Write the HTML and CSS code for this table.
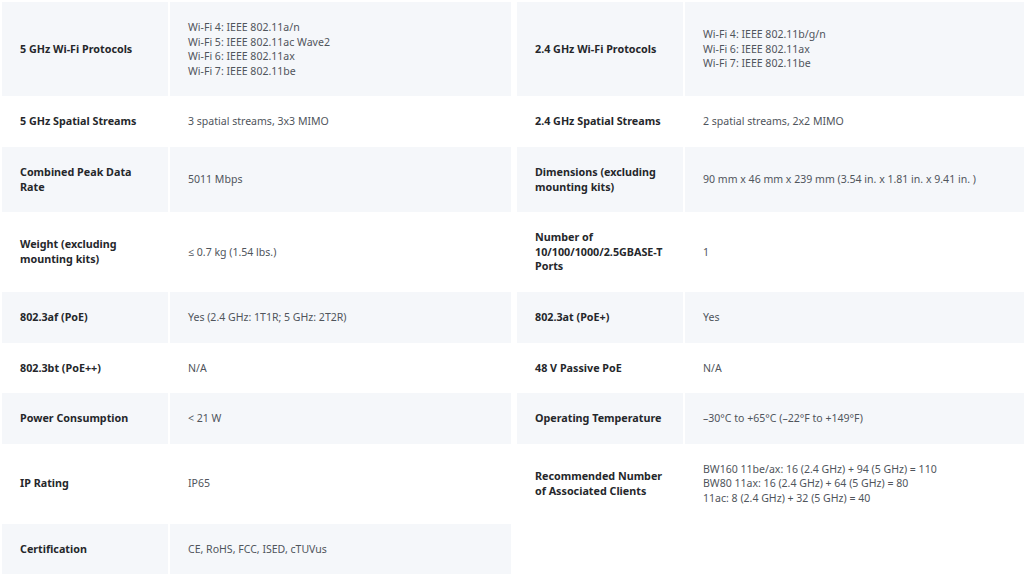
FILE: index.html
```html
<!DOCTYPE html>
<html lang="en">
<head>
<meta charset="utf-8">
<title>Specifications</title>
<link rel="stylesheet" href="styles.css">
</head>
<body>
<div class="specs">
  <div class="spec shade"><div class="label">5 GHz Wi-Fi Protocols</div><div class="value">Wi-Fi 4: IEEE 802.11a/n<br>Wi-Fi 5: IEEE 802.11ac Wave2<br>Wi-Fi 6: IEEE 802.11ax<br>Wi-Fi 7: IEEE 802.11be</div></div>
  <div class="spec shade"><div class="label">2.4 GHz Wi-Fi Protocols</div><div class="value">Wi-Fi 4: IEEE 802.11b/g/n<br>Wi-Fi 6: IEEE 802.11ax<br>Wi-Fi 7: IEEE 802.11be</div></div>

  <div class="spec"><div class="label">5 GHz Spatial Streams</div><div class="value">3 spatial streams, 3x3 MIMO</div></div>
  <div class="spec"><div class="label">2.4 GHz Spatial Streams</div><div class="value">2 spatial streams, 2x2 MIMO</div></div>

  <div class="spec shade"><div class="label">Combined Peak Data Rate</div><div class="value">5011 Mbps</div></div>
  <div class="spec shade"><div class="label">Dimensions (excluding mounting kits)</div><div class="value">90 mm x 46 mm x 239 mm (3.54 in. x 1.81 in. x 9.41 in. )</div></div>

  <div class="spec"><div class="label">Weight (excluding mounting kits)</div><div class="value">≤ 0.7 kg (1.54 lbs.)</div></div>
  <div class="spec"><div class="label">Number of 10/100/1000/2.5GBASE-T Ports</div><div class="value">1</div></div>

  <div class="spec shade"><div class="label">802.3af (PoE)</div><div class="value">Yes (2.4 GHz: 1T1R; 5 GHz: 2T2R)</div></div>
  <div class="spec shade"><div class="label">802.3at (PoE+)</div><div class="value">Yes</div></div>

  <div class="spec"><div class="label">802.3bt (PoE++)</div><div class="value">N/A</div></div>
  <div class="spec"><div class="label">48 V Passive PoE</div><div class="value">N/A</div></div>

  <div class="spec shade"><div class="label">Power Consumption</div><div class="value">&lt; 21 W</div></div>
  <div class="spec shade"><div class="label">Operating Temperature</div><div class="value">–30°C to +65°C (–22°F to +149°F)</div></div>

  <div class="spec"><div class="label">IP Rating</div><div class="value">IP65</div></div>
  <div class="spec"><div class="label">Recommended Number of Associated Clients</div><div class="value">BW160 11be/ax: 16 (2.4 GHz) + 94 (5 GHz) = 110<br>BW80 11ax: 16 (2.4 GHz) + 64 (5 GHz) = 80<br>11ac: 8 (2.4 GHz) + 32 (5 GHz) = 40</div></div>

  <div class="spec shade"><div class="label">Certification</div><div class="value">CE, RoHS, FCC, ISED, cTUVus</div></div>
</div>
</body>
</html>
```
FILE: styles.css
```css
html, body {
  margin: 0;
  padding: 0;
  background: #ffffff;
  overflow: hidden;
}

body {
  font-family: "Noto Sans", "Open Sans", sans-serif;
  font-size: 11px;
  line-height: 14.6px;
}

.specs {
  display: grid;
  grid-template-columns: 509px 509px;
  column-gap: 6px;
  padding: 2px 0 0 2px;
  width: 1030px;
}

.spec {
  display: grid;
  grid-template-columns: 166px 1fr;
  column-gap: 2px;
}

.label,
.value {
  display: flex;
  align-items: center;
  padding: 18px 18px;
}

.label {
  font-size: 10.75px;
  font-weight: 700;
  color: #25272b;
  padding-right: 12px;
}

.value {
  font-size: 10.55px;
  color: #50555c;
}

.spec.shade .label,
.spec.shade .value {
  background: #f5f7fa;
}
```
